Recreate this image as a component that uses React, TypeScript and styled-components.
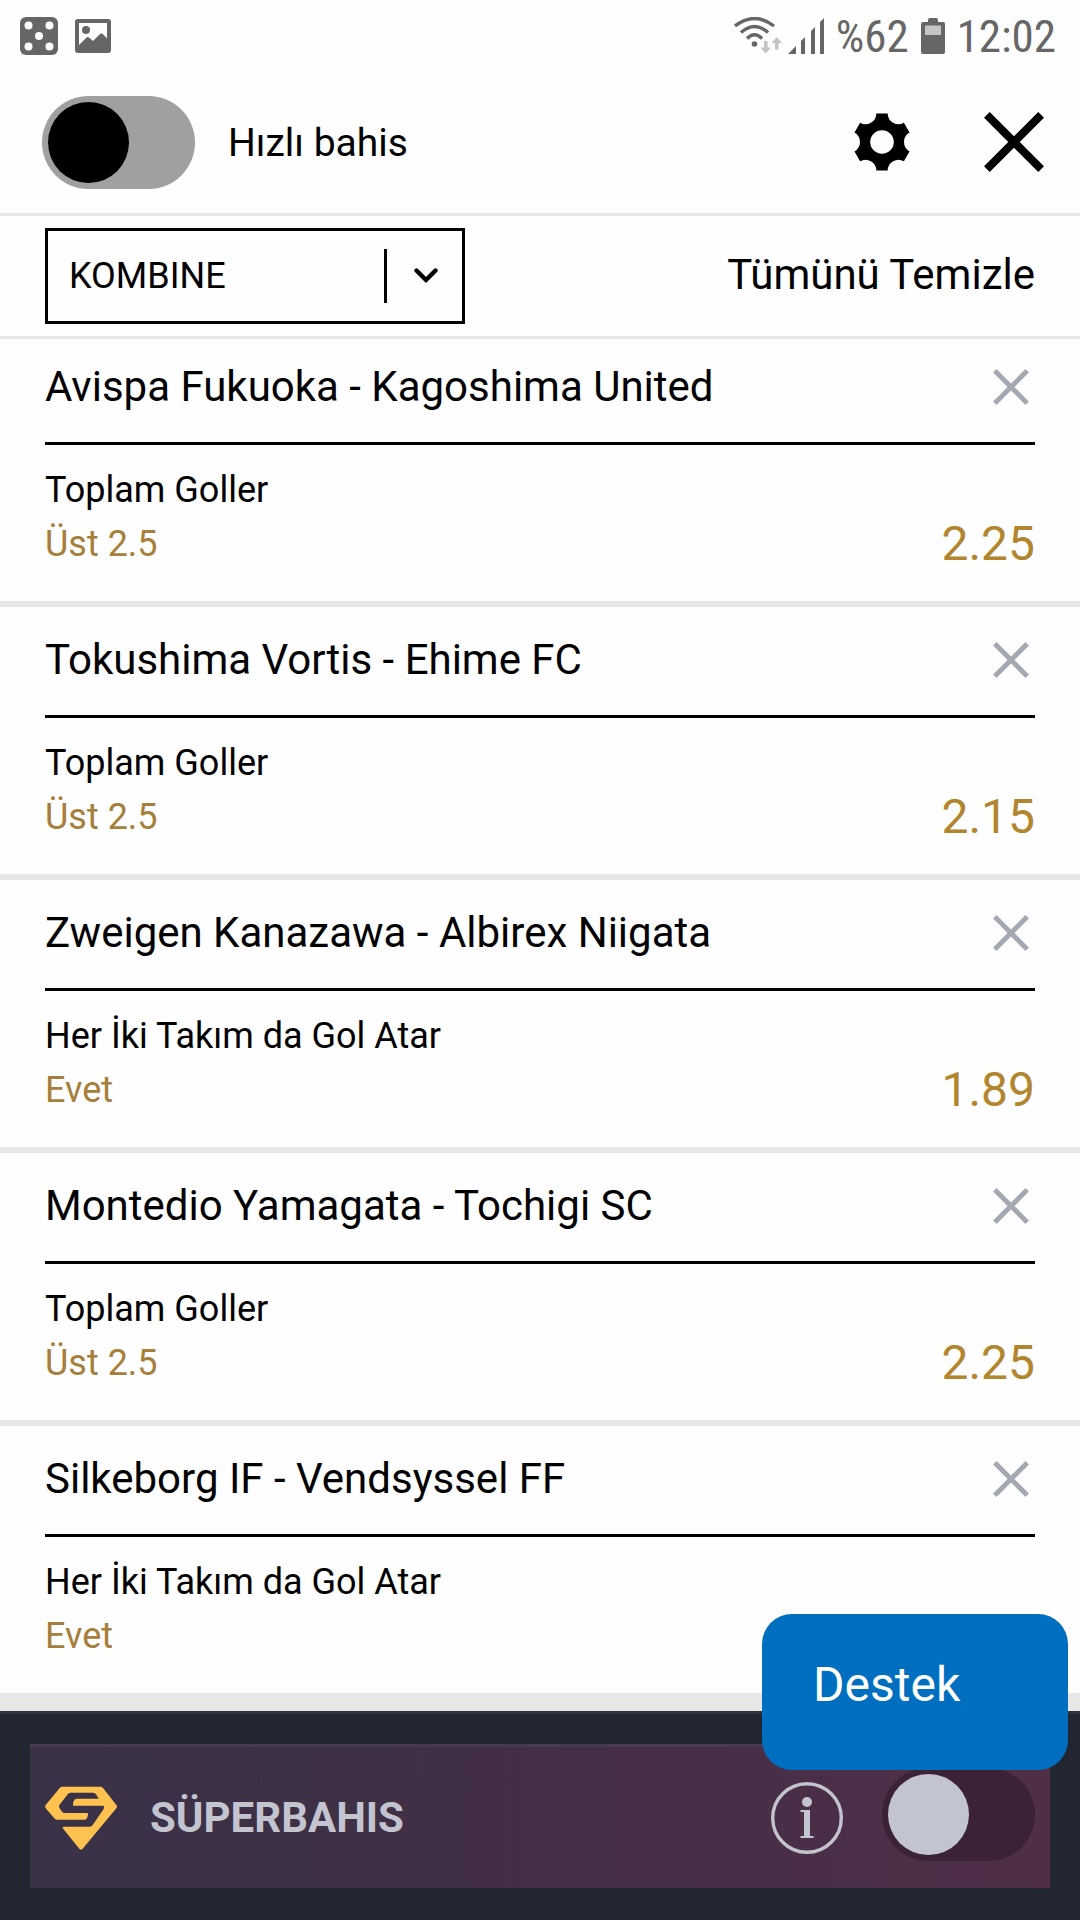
import React, { useState } from "react";
import styled, { createGlobalStyle } from "styled-components";

const GlobalStyle = createGlobalStyle`
  *, *::before, *::after { box-sizing: border-box; }
  body {
    margin: 0;
    background: #fefefe;
    color: #000;
    font-family: Roboto, "Noto Sans", sans-serif;
  }
  button, select { font: inherit; color: inherit; }
  svg { display: block; }
`;

const Page = styled.div`
  display: flex;
  flex-direction: column;
  min-height: 100vh;
`;

const StatusBar = styled.div`
  display: flex;
  align-items: center;
  justify-content: space-between;
  height: 72px;
  padding: 0 24px 0 20px;
  color: #666;
  font-family: "Roboto Condensed", Roboto, sans-serif;
  font-size: 45px;
`;

const StatusGroup = styled.div<{ $gap: number }>`
  display: flex;
  align-items: center;
  gap: ${(p) => p.$gap}px;
`;

const Header = styled.header`
  display: flex;
  align-items: center;
  gap: 48px;
  height: 144px;
  padding: 0 36px 0 42px;
  border-bottom: 3px solid #e7e7e7;
`;

const QuickBet = styled.label`
  display: flex;
  align-items: center;
  gap: 33px;
  margin-right: auto;
  font-size: 39px;
`;

const Toggle = styled.input<{ $track: string; $knob: string }>`
  appearance: none;
  flex: none;
  width: 153px;
  height: 93px;
  margin: 0;
  padding: 6px;
  border-radius: 47px;
  background: ${(p) => p.$track};
  cursor: pointer;

  &::before {
    content: "";
    display: block;
    width: 81px;
    height: 81px;
    border-radius: 50%;
    background: ${(p) => p.$knob};
  }
  &:checked::before { margin-left: auto; }
`;

const IconButton = styled.button<{ $size: number }>`
  display: grid;
  place-items: center;
  flex: none;
  width: ${(p) => p.$size}px;
  height: ${(p) => p.$size}px;
  padding: 0;
  border: 0;
  background: none;
  cursor: pointer;
`;

const HeaderActions = styled.div`
  display: flex;
  gap: 72px;
  padding-bottom: 2px;
`;

const FilterBar = styled.div`
  display: flex;
  align-items: center;
  justify-content: space-between;
  padding: 12px 45px;
  border-bottom: 3px solid #e7e7e7;
`;

const SelectBox = styled.div`
  display: grid;
  align-items: center;
  width: 420px;
  height: 96px;
  border: 3px solid #000;

  > * { grid-area: 1 / 1; }
`;

const BetSelect = styled.select`
  appearance: none;
  width: 100%;
  height: 100%;
  padding: 0 84px 0 21px;
  border: 0;
  border-radius: 0;
  background: transparent;
  font-size: 36px;
`;

const SelectArrow = styled.span`
  display: flex;
  align-items: center;
  justify-self: end;
  gap: 27px;
  padding-right: 24px;
  pointer-events: none;

  &::before {
    content: "";
    width: 3px;
    height: 54px;
    background: #000;
  }
`;

const ClearAll = styled.button`
  padding: 0 0 3px;
  border: 0;
  background: none;
  font-size: 42px;
  cursor: pointer;
`;

const BetList = styled.ul`
  margin: 0;
  padding: 0 0 12px;
  list-style: none;
  background: #e7e7e7;
`;

const BetItem = styled.li`
  padding: 0 45px 30px;
  background: #fefefe;
  border-bottom: 6px solid #e7e7e7;
`;

const BetTitle = styled.div<{ $first: boolean }>`
  display: flex;
  align-items: center;
  justify-content: space-between;
  height: ${(p) => (p.$first ? 106 : 111)}px;
  padding-top: ${(p) => (p.$first ? 0 : 5)}px;
  padding-bottom: 8px;
  border-bottom: 3px solid #000;
`;

const Teams = styled.h2`
  margin: 0;
  font-size: 42px;
  font-weight: 400;
`;

const BetBody = styled.div`
  display: flex;
  align-items: flex-end;
  justify-content: space-between;
  padding-top: 18px;
  line-height: 54px;
`;

const Market = styled.div`
  font-size: 36px;
`;

const Pick = styled.div`
  color: #a67f3b;
  font-size: 36px;
`;

const Odds = styled.div`
  color: #b2852f;
  font-size: 48px;
`;

const Footer = styled.footer`
  flex: 1;
  padding: 30px;
  border-top: 3px solid #2e323d;
  background: #222631;
`;

const SuperCard = styled.section`
  display: flex;
  align-items: center;
  height: 144px;
  padding: 0 15px;
  border-top: 3px solid #483a51;
  background: linear-gradient(90deg, #393246, #422f46 45%, #502e48);
  color: #c2c4cf;
`;

const SuperName = styled.label`
  margin: 0 auto 0 33px;
  font-size: 42px;
  font-weight: 700;
`;

const SuperActions = styled.div`
  display: flex;
  align-items: center;
  gap: 39px;
`;

const ToggleSlot = styled.div`
  display: flex;
  padding-bottom: 6px;
`;

const Support = styled.button`
  position: fixed;
  right: 12px;
  bottom: 150px;
  width: 306px;
  height: 156px;
  padding: 0 51px 15px;
  border: 0;
  border-radius: 30px;
  background: #006fbf;
  color: #fff;
  font-size: 48px;
  text-align: left;
  cursor: pointer;
`;

const DiceIcon = () => (
  <svg width="38" height="38" viewBox="0 0 38 38">
    <rect width="38" height="38" rx="6" fill="#666" />
    {[[8.5, 8.5], [29.5, 8.5], [19, 19], [8.5, 29.5], [29.5, 29.5]].map(([x, y]) => (
      <circle key={`${x}-${y}`} cx={x} cy={y} r="4" fill="#fefefe" />
    ))}
  </svg>
);

const PictureIcon = () => (
  <svg width="36" height="34" viewBox="0 0 36 34">
    <rect width="36" height="34" rx="3" fill="#666" />
    <path d="M4 4H32V19.5L28.5 15.8Q26.5 13.6 24.500 15.500L18 22L14 18.500Q12.500 17.500 11 19L4 26Z" fill="#fefefe" />
    <circle cx="11" cy="11" r="4" fill="#666" />
  </svg>
);

const WifiIcon = () => (
  <svg width="49" height="38" viewBox="0 0 49 38">
    <g fill="none" stroke="#666" strokeWidth="3.400">
      <path d="M1 9Q20.500 -6 40 9" />
      <path d="M7 15.500Q20.500 3.500 34 15.500" />
      <path d="M13 21.500Q20.500 14 28 21.500" />
    </g>
    <circle cx="20.500" cy="27" r="2.800" fill="#666" />
    <g fill="#c4c4c4">
      <path d="M30 24h3.600v6.500H37L31.800 36.500L26.500 30.500H30Z" />
      <path d="M41 32.500h3.600V26H48L42.800 20L37.500 26H41Z" />
    </g>
  </svg>
);

const SignalIcon = () => (
  <svg width="36" height="38" viewBox="0 0 36 38" fill="#666">
    <path d="M0 37L8 29V37ZM13 24L17 20V37H13ZM23 14L27 10V37H23ZM32 5L36 1V37H32Z" />
  </svg>
);

const BatteryIcon = () => (
  <svg width="24" height="36" viewBox="0 0 24 36">
    <path d="M7 2Q7 0 9 0H15Q17 0 17 2V4H22Q24 4 24 6V34Q24 36 22 36H2Q0 36 0 34V6Q0 4 2 4H7Z" fill="#666" />
    <rect x="4" y="7.500" width="16" height="9.500" fill="#c4c4c4" />
  </svg>
);

const GearIcon = () => (
  <svg width="56" height="58" viewBox="-28 -29 56 58">
    <path
      fillRule="evenodd"
      d="M-5.7 -28.600H5.700A10.800 10.800 0 0 0 21.900 -19.200L27.500 -9.400A10.800 10.800 0 0 0 27.500 9.400L21.900 19.200A10.800 10.800 0 0 0 5.700 28.600H-5.700A10.800 10.800 0 0 0 -21.900 19.200L-27.500 9.400A10.800 10.800 0 0 0 -27.500 -9.400L-21.900 -19.200A10.800 10.800 0 0 0 -5.700 -28.600ZM0 -11.800A11.800 11.800 0 1 0 0 11.800A11.800 11.800 0 1 0 0 -11.800Z"
    />
  </svg>
);

const CrossIcon = ({ size, stroke, color }: { size: number; stroke: number; color: string }) => {
  const near = stroke * 0.36;
  const far = size - near;
  return (
    <svg width={size} height={size} viewBox={`0 0 ${size} ${size}`}>
      <path
        d={`M${near} ${near}L${far} ${far}M${far} ${near}L${near} ${far}`}
        stroke={color}
        strokeWidth={stroke}
      />
    </svg>
  );
};

const ChevronIcon = () => (
  <svg width="24" height="16" viewBox="0 0 24 16">
    <path d="M2.500 2.500L12 12L21.500 2.500" fill="none" stroke="#000" strokeWidth="4.400" strokeLinecap="round" />
  </svg>
);

const DiamondLogo = () => (
  <svg width="72" height="65" viewBox="0 -4 216 195">
    <path
      fill="#ffc14f"
      d="M53 1H165Q171 1 174 5L214 56Q218 61 214 66L113 187Q108 192 103 187L55 128Q50 121 58 121H135Q140 121 143 116L176 68Q180 58 172 58H84Q84 37 95 37H161L153 24Q150 19 144 19H78Q72 19 69 23L43 56Q41 61 44 66L51 76Q54 80 60 80H124Q131 80 129 87L126 95Q124 100 119 100H37Q31 100 28 96L2 66Q-1 61 2 56L44 5Q48 1 53 1Z"
    />
  </svg>
);

const InfoIcon = () => (
  <svg width="72" height="72" viewBox="0 0 72 72">
    <circle cx="36" cy="36" r="34.300" fill="none" stroke="#c2c4cf" strokeWidth="3.400" />
    <circle cx="36" cy="20" r="5" fill="#c2c4cf" />
    <path d="M29.500 28H39V54H42.500V56H29.500V54H33V30H29.500Z" fill="#c2c4cf" />
  </svg>
);

interface Bet {
  teams: string;
  market: string;
  pick: string;
  odds?: string;
}

const bets: Bet[] = [
  { teams: "Avispa Fukuoka - Kagoshima United", market: "Toplam Goller", pick: "Üst 2.5", odds: "2.25" },
  { teams: "Tokushima Vortis - Ehime FC", market: "Toplam Goller", pick: "Üst 2.5", odds: "2.15" },
  { teams: "Zweigen Kanazawa - Albirex Niigata", market: "Her İki Takım da Gol Atar", pick: "Evet", odds: "1.89" },
  { teams: "Montedio Yamagata - Tochigi SC", market: "Toplam Goller", pick: "Üst 2.5", odds: "2.25" },
  { teams: "Silkeborg IF - Vendsyssel FF", market: "Her İki Takım da Gol Atar", pick: "Evet" },
];

export default function App() {
  const [quick, setQuick] = useState(false);
  const [superBet, setSuperBet] = useState(false);

  return (
    <Page>
      <GlobalStyle />
      <StatusBar>
        <StatusGroup $gap={17}>
          <DiceIcon />
          <PictureIcon />
        </StatusGroup>
        <StatusGroup $gap={12}>
          <StatusGroup $gap={5}>
            <WifiIcon />
            <SignalIcon />
          </StatusGroup>
          <span>%62</span>
          <BatteryIcon />
          <span>12:02</span>
        </StatusGroup>
      </StatusBar>

      <Header>
        <QuickBet>
          <Toggle
            type="checkbox"
            $track="#a0a0a0"
            $knob="#000"
            checked={quick}
            onChange={(e) => setQuick(e.target.checked)}
          />
          Hızlı bahis
        </QuickBet>
        <HeaderActions>
          <IconButton $size={60} aria-label="Ayarlar">
            <GearIcon />
          </IconButton>
          <IconButton $size={60} aria-label="Kapat">
            <CrossIcon size={60} stroke={8} color="#000" />
          </IconButton>
        </HeaderActions>
      </Header>

      <FilterBar>
        <SelectBox>
          <BetSelect aria-label="Kupon türü" defaultValue="kombine">
            <option value="kombine">KOMBINE</option>
          </BetSelect>
          <SelectArrow>
            <ChevronIcon />
          </SelectArrow>
        </SelectBox>
        <ClearAll>Tümünü Temizle</ClearAll>
      </FilterBar>

      <BetList>
        {bets.map((bet, i) => (
          <BetItem key={bet.teams}>
            <BetTitle $first={i === 0}>
              <Teams>{bet.teams}</Teams>
              <IconButton $size={48} aria-label={`${bet.teams} kaldır`}>
                <CrossIcon size={36} stroke={5} color="#a4a8b1" />
              </IconButton>
            </BetTitle>
            <BetBody>
              <div>
                <Market>{bet.market}</Market>
                <Pick>{bet.pick}</Pick>
              </div>
              {bet.odds && <Odds>{bet.odds}</Odds>}
            </BetBody>
          </BetItem>
        ))}
      </BetList>

      <Footer>
        <SuperCard>
          <DiamondLogo />
          <SuperName htmlFor="super-toggle">SÜPERBAHIS</SuperName>
          <SuperActions>
            <IconButton $size={72} aria-label="Bilgi">
              <InfoIcon />
            </IconButton>
            <ToggleSlot>
              <Toggle
                id="super-toggle"
                type="checkbox"
                $track="#3b2236"
                $knob="#c2c4cf"
                checked={superBet}
                onChange={(e) => setSuperBet(e.target.checked)}
              />
            </ToggleSlot>
          </SuperActions>
        </SuperCard>
      </Footer>

      <Support>Destek</Support>
    </Page>
  );
}
